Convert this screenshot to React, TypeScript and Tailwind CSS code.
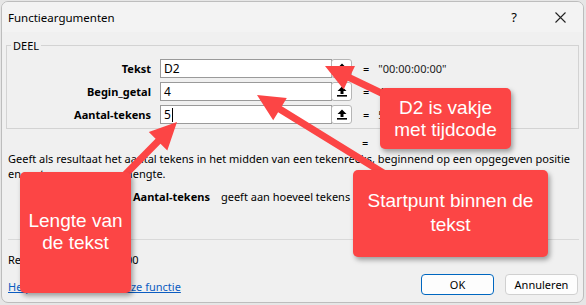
import React from "react";

const RED = "#fc4545";

function arrowPoints(tx: number, ty: number, sx: number, sy: number) {
  const dx = tx - sx;
  const dy = ty - sy;
  const len = Math.hypot(dx, dy);
  const ux = dx / len;
  const uy = dy / len;
  const nx = -uy;
  const ny = ux;
  const headLen = 27;
  const headW = 26;
  const shaftW = 7;
  const bx = tx - ux * headLen;
  const by = ty - uy * headLen;
  const p = [
    [sx + (nx * shaftW) / 2, sy + (ny * shaftW) / 2],
    [bx + (nx * shaftW) / 2, by + (ny * shaftW) / 2],
    [bx + (nx * headW) / 2, by + (ny * headW) / 2],
    [tx, ty],
    [bx - (nx * headW) / 2, by - (ny * headW) / 2],
    [bx - (nx * shaftW) / 2, by - (ny * shaftW) / 2],
    [sx - (nx * shaftW) / 2, sy - (ny * shaftW) / 2],
  ];
  return p.map((q) => q[0].toFixed(1) + "," + q[1].toFixed(1)).join(" ");
}

function RefIcon() {
  return (
    <svg width="10" height="11" viewBox="0 0 10 11">
      <path d="M5 0.5 L9.5 5 H6.5 V8 H3.5 V5 H0.5 Z" fill="#000" />
      <rect x="0" y="9" width="10" height="1.6" fill="#000" />
    </svg>
  );
}

function ArgRow({ label, value, result, caret }: { label: string; value: string; result?: string; caret?: boolean }) {
  return (
    <div className="flex items-center h-[19px] whitespace-nowrap">
      <div className="w-[144px] text-right font-bold">{label}</div>
      <div className="ml-[9px] w-[172px] h-[19px] bg-white border border-[#9a9a9a] flex items-center pl-[3px] text-[12px]">
        <span>{value}</span>
        {caret && <span className="inline-block w-px h-[14px] bg-black ml-px" />}
      </div>
      <div className="ml-[-1px] w-[21px] h-[19px] bg-white border border-[#b5b5b5] rounded-[3px] flex items-center justify-center">
        <RefIcon />
      </div>
      <div className="ml-[11px]">=</div>
      <div className="ml-[9px] text-[#1a1a1a]">{result}</div>
    </div>
  );
}

export default function App() {
  return (
    <div className="relative w-[586px] h-[305px] bg-[#e6e6e6] overflow-hidden" style={{ fontFamily: '"Noto Sans", sans-serif' }}>
      <div className="absolute left-px top-px w-[583px] h-[302px] bg-[#f0f0f0] border border-[#bdbdbd] rounded-[7px] overflow-hidden text-[11px] leading-[15px] text-black flex flex-col whitespace-nowrap">
        {/* title bar */}
        <div className="h-[30px] bg-[#f3f3f3] flex items-center pl-[6px] shrink-0">
          <span className="text-[11.5px]">Functieargumenten</span>
          <span className="ml-auto w-[46px] text-center text-[13px]">?</span>
          <span className="w-[46px] flex justify-center">
            <svg width="11" height="11" viewBox="0 0 11 11">
              <path d="M0.5 0.5 L10.5 10.5 M10.5 0.5 L0.5 10.5" stroke="#222" strokeWidth="1.1" />
            </svg>
          </span>
        </div>
        {/* group box */}
        <div className="relative mt-[13px] ml-[4px] w-[573px] h-[84px] border border-[#d3d3d3] pt-[13px] flex flex-col gap-[4px] shrink-0">
          <span className="absolute left-[4px] top-[-8px] px-[2px] bg-[#f0f0f0] leading-[15px]">DEEL</span>
          <ArgRow label="Tekst" value="D2" result={'"00:00:00:00"'} />
          <ArgRow label="Begin_getal" value="4" result="4" />
          <ArgRow label="Aantal-tekens" value="5" result="5" caret />
        </div>
        <div className="mt-[6px] pl-[360px] h-[15px]">
          = <span className="ml-[9px]">"00:00"</span>
        </div>
        <div className="pl-[6px] mt-[1px]">
          <div>Geeft als resultaat het aantal tekens in het midden van een tekenreeks, beginnend op een opgegeven positie</div>
          <div>en met een opgegeven lengte.</div>
        </div>
        <div className="mt-[8px] flex">
          <span className="ml-[131px] font-bold">Aantal-tekens</span>
          <span className="ml-[11px]">geeft aan hoeveel tekens u wilt ophalen uit Tekst.</span>
        </div>
        <div className="mt-[35px] ml-[6px] w-[571px] h-px bg-[#d9d9d9] shrink-0" />
        <div className="mt-[12px] pl-[6px]">
          Resultaat =<span className="ml-[45px]">00:00</span>
        </div>
        <div className="mt-[7px] flex items-start pl-[6px] pr-[5px]">
          <span className="mt-[5px] text-[#0b5cc1] underline">Help-informatie over deze functie</span>
          <div className="ml-auto flex gap-[11px]">
            <div className="w-[73px] h-[21px] rounded-[4px] border border-[#0067c0] bg-[#fdfdfd] flex items-center justify-center">OK</div>
            <div className="w-[73px] h-[21px] rounded-[4px] border border-[#d0d0d0] bg-[#fdfdfd] flex items-center justify-center">Annuleren</div>
          </div>
        </div>
      </div>

      {/* arrows */}
      <svg className="absolute left-0 top-0" width="586" height="305" viewBox="0 0 586 305">
        <polygon points={arrowPoints(325, 66, 398, 101)} fill={RED} />
        <polygon points={arrowPoints(257, 95, 398, 182)} fill={RED} />
        <polygon points={arrowPoints(177, 122, 112, 188)} fill={RED} />
      </svg>

      {/* callouts */}
      <div
        className="absolute left-[380px] top-[88px] w-[131px] h-[61px] rounded-[5px] shadow-[2px_3px_5px_rgba(0,0,0,0.35)] text-white text-[19px] leading-[22px] flex flex-col items-center justify-center"
        style={{ backgroundColor: RED, fontFamily: '"Liberation Sans", Arial, sans-serif' }}
      >
        <span>D2 is vakje</span>
        <span>met tijdcode</span>
      </div>
      <div
        className="absolute left-[353px] top-[170px] w-[195px] h-[87px] rounded-[5px] shadow-[2px_3px_5px_rgba(0,0,0,0.35)] text-white text-[19px] leading-[24px] flex flex-col items-center pt-[19px]"
        style={{ backgroundColor: RED, fontFamily: '"Liberation Sans", Arial, sans-serif' }}
      >
        <span>Startpunt binnen de</span>
        <span>tekst</span>
      </div>
      <div
        className="absolute left-[20px] top-[172px] w-[111px] h-[121px] rounded-[5px] shadow-[2px_3px_5px_rgba(0,0,0,0.35)] text-white text-[19px] leading-[22px] flex flex-col items-center pt-[38px]"
        style={{ backgroundColor: RED, fontFamily: '"Liberation Sans", Arial, sans-serif' }}
      >
        <span>Lengte van</span>
        <span>de tekst</span>
      </div>
    </div>
  );
}
